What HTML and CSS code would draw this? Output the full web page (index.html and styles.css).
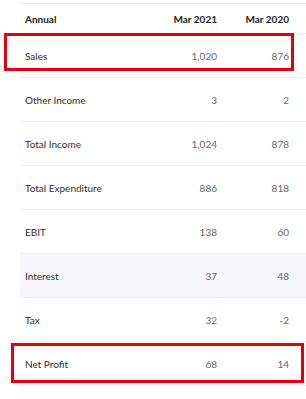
FILE: index.html
```html
<!DOCTYPE html>
<html>
<head>
<meta charset="utf-8">
<link rel="stylesheet" href="styles.css">
</head>
<body>
<div class="page">
  <div class="table">
    <div class="row head">
      <div class="label">Annual</div>
      <div class="num">Mar 2021</div>
      <div class="num last">Mar 2020</div>
    </div>
    <div class="row">
      <div class="label">Sales</div>
      <div class="num">1,020</div>
      <div class="num last">876</div>
    </div>
    <div class="row">
      <div class="label">Other Income</div>
      <div class="num">3</div>
      <div class="num last">2</div>
    </div>
    <div class="row">
      <div class="label">Total Income</div>
      <div class="num">1,024</div>
      <div class="num last">878</div>
    </div>
    <div class="row">
      <div class="label">Total Expenditure</div>
      <div class="num">886</div>
      <div class="num last">818</div>
    </div>
    <div class="row">
      <div class="label">EBIT</div>
      <div class="num">138</div>
      <div class="num last">60</div>
    </div>
    <div class="row shaded">
      <div class="label">Interest</div>
      <div class="num">37</div>
      <div class="num last">48</div>
    </div>
    <div class="row">
      <div class="label">Tax</div>
      <div class="num">32</div>
      <div class="num last">-2</div>
    </div>
    <div class="row">
      <div class="label">Net Profit</div>
      <div class="num">68</div>
      <div class="num last">14</div>
    </div>
  </div>
  <div class="mark mark-sales"></div>
  <div class="mark mark-profit"></div>
</div>
</body>
</html>
```

FILE: styles.css
```css
html, body {
  margin: 0;
  padding: 0;
  background: #ffffff;
}

.page {
  position: relative;
  width: 306px;
  height: 399px;
  overflow: hidden;
  padding-top: 3px;
  box-sizing: border-box;
  font-family: Lato, "Open Sans", "Liberation Sans", sans-serif;
  font-size: 10px;
}

.table {
  margin-left: 20px;
  border-top: 1px solid #e9e9e9;
}

.row {
  display: grid;
  grid-template-columns: 1fr 80px 89px;
  align-items: center;
  height: 44px;
  box-sizing: border-box;
  border-bottom: 1px solid #efefef;
}

.row.head {
  height: 30px;
  border-bottom: 1px solid #efefef;
  font-weight: 700;
  color: #222;
}

.row.shaded {
  background: #f5f7fa;
}

.label {
  padding-left: 5px;
  color: #2e2e2e;
}

.head .label,
.head .num {
  color: #222;
}

.num {
  text-align: right;
  color: #666;
}

.num.last {
  padding-right: 17px;
}

.mark {
  position: absolute;
  border: 3px solid #e3000b;
  box-sizing: border-box;
}

.mark-sales {
  left: 4px;
  top: 33px;
  width: 290px;
  height: 38px;
}

.mark-profit {
  left: 11px;
  top: 343px;
  width: 293px;
  height: 40px;
}
```
